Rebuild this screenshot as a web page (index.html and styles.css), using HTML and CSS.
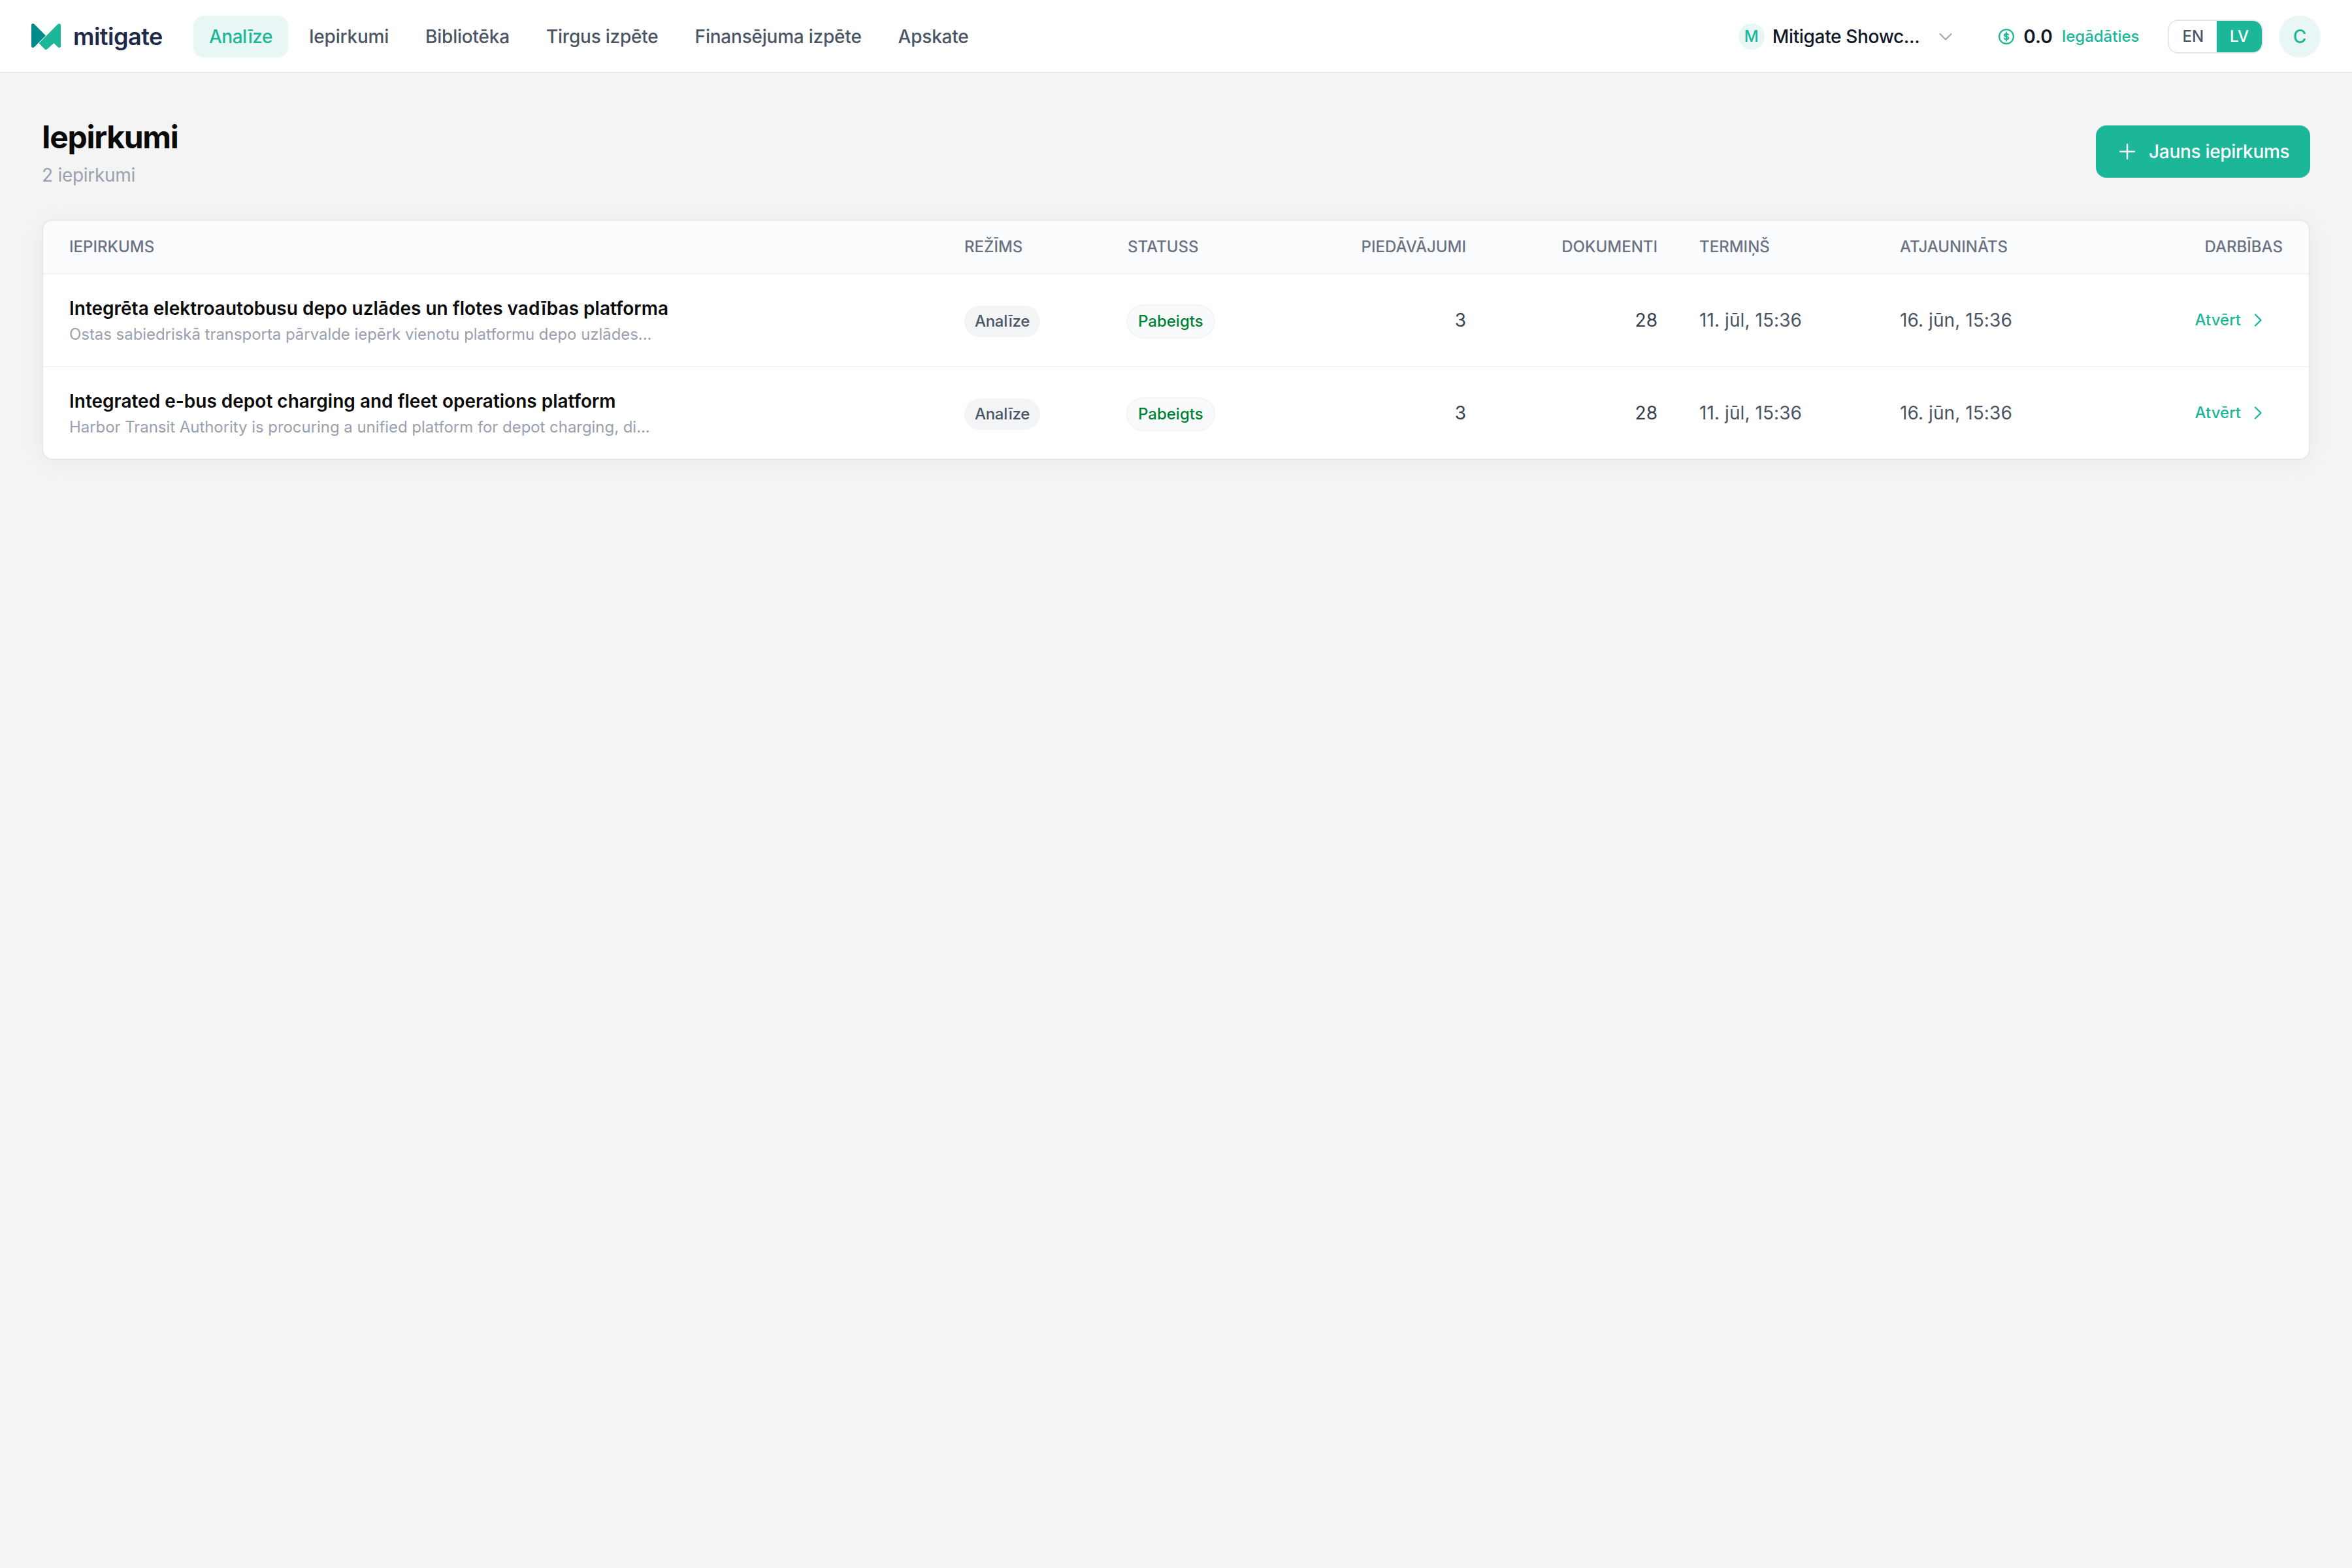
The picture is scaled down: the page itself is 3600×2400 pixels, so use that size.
FILE: index.html
```html
<!DOCTYPE html>
<html lang="lv">
<head>
  <meta charset="UTF-8" />
  <meta name="viewport" content="width=device-width, initial-scale=1.0" />
  <title>Iepirkumi</title>
  <link rel="stylesheet" href="styles.css">
</head>
<body>
  <header class="topbar">
    <a class="logo">
      <svg class="logo-mark" viewBox="0 0 46 40">
        <path d="M0 2.500C0 0.200 2.500-0.800 4.500 1L22 18.500 4.500 36C2.500 37.800 0 37 0 34.500Z" fill="#008b8b"/>
        <path d="M40.500 1C42-0.500 45 0.200 45 2.500V34.500C45 37 42.500 37.800 40.500 36L34.500 30 24.500 39C23.200 40.300 21.500 40.300 20.300 39L11.500 30.300Z" fill="#1cb698"/>
      </svg>
      <span class="logo-text">mitigate</span>
    </a>
    <nav class="nav">
      <a class="nav-link active">Analīze</a>
      <a class="nav-link">Iepirkumi</a>
      <a class="nav-link">Bibliotēka</a>
      <a class="nav-link">Tirgus izpēte</a>
      <a class="nav-link">Finansējuma izpēte</a>
      <a class="nav-link">Apskate</a>
    </nav>
    <div class="topbar-right">
      <div class="workspace">
        <span class="workspace-badge">M</span>
        <span class="workspace-name">Mitigate Showc...</span>
        <svg class="chevron" viewBox="0 0 24 24"><path d="M3.500 8l8.500 8.500L20.500 8"/></svg>
      </div>
      <div class="credits">
        <svg class="coin" viewBox="0 0 24 24">
          <circle cx="12" cy="12" r="10.900"/>
          <path d="M12 5.500v13M15 9.200C14.500 8.200 13.400 7.800 12 7.800c-1.800 0-3 .8-3 2.100 0 3 6.200 1.200 6.200 4.200 0 1.400-1.300 2.200-3.200 2.200-1.600 0-2.800-.6-3.200-1.700"/>
        </svg>
        <span class="credits-value">0.0</span>
        <a class="credits-buy">Iegādāties</a>
      </div>
      <div class="lang">
        <button class="lang-btn">EN</button>
        <button class="lang-btn selected">LV</button>
      </div>
      <div class="avatar">C</div>
    </div>
  </header>

  <main class="page">
    <div class="page-head">
      <div>
        <h1>Iepirkumi</h1>
        <p class="count">2 iepirkumi</p>
      </div>
      <button class="btn-new">
        <svg class="plus" viewBox="0 0 24 24"><path d="M12 1v22M1 12h22"/></svg>
        Jauns iepirkums
      </button>
    </div>

    <div class="card">
      <table>
        <colgroup>
          <col class="col-name"><col class="col-mode"><col class="col-status"><col class="col-bids">
          <col class="col-docs"><col class="col-due"><col class="col-updated"><col class="col-actions">
        </colgroup>
        <thead>
          <tr>
            <th class="first">Iepirkums</th>
            <th>Režīms</th>
            <th>Statuss</th>
            <th class="num">Piedāvājumi</th>
            <th class="num">Dokumenti</th>
            <th>Termiņš</th>
            <th>Atjaunināts</th>
            <th class="last">Darbības</th>
          </tr>
        </thead>
        <tbody>
          <tr>
            <td class="first">
              <div class="title">Integrēta elektroautobusu depo uzlādes un flotes vadības platforma</div>
              <div class="desc">Ostas sabiedriskā transporta pārvalde iepērk vienotu platformu depo uzlādes...</div>
            </td>
            <td class="tags"><span class="tag">Analīze</span></td>
            <td class="tags"><span class="tag status">Pabeigts</span></td>
            <td class="num">3</td>
            <td class="num">28</td>
            <td class="date">11. jūl, 15:36</td>
            <td class="date">16. jūn, 15:36</td>
            <td class="last"><a class="open">Atvērt <svg class="arrow" viewBox="0 0 12 20"><path d="M2 1.500l8.500 8.500L2 18.500"/></svg></a></td>
          </tr>
          <tr>
            <td class="first">
              <div class="title">Integrated e-bus depot charging and fleet operations platform</div>
              <div class="desc">Harbor Transit Authority is procuring a unified platform for depot charging, di...</div>
            </td>
            <td class="tags"><span class="tag">Analīze</span></td>
            <td class="tags"><span class="tag status">Pabeigts</span></td>
            <td class="num">3</td>
            <td class="num">28</td>
            <td class="date">11. jūl, 15:36</td>
            <td class="date">16. jūn, 15:36</td>
            <td class="last"><a class="open">Atvērt <svg class="arrow" viewBox="0 0 12 20"><path d="M2 1.500l8.500 8.500L2 18.500"/></svg></a></td>
          </tr>
        </tbody>
      </table>
    </div>
  </main>
</body>
</html>
```

FILE: styles.css
```css
* {
  box-sizing: border-box;
}

body {
  margin: 0;
  min-height: 100vh;
  background: #f4f4f4;
  color: #0a0a0a;
  font-family: Inter, sans-serif;
  font-size: 28px;
  line-height: 40px;
}

button {
  border: 0;
  font: inherit;
}

svg {
  fill: none;
  stroke-linecap: round;
  stroke-linejoin: round;
  flex-shrink: 0;
}

.topbar {
  display: flex;
  align-items: center;
  height: 112px;
  padding: 2px 48px 0;
  background: #fff;
  border-bottom: 2px solid #e5e7eb;
}

.logo {
  display: flex;
  align-items: center;
  width: 248px;
}

.logo-mark {
  width: 46px;
  height: 40px;
}

.logo-text {
  margin-left: 18px;
  color: #1f2a4a;
  font-size: 36px;
  font-weight: 600;
  line-height: 38px;
  letter-spacing: -0.5px;
}

.nav {
  display: flex;
  gap: 8px;
}

.nav-link {
  padding: 12px 24px;
  border-radius: 16px;
  color: #4a5565;
  font-weight: 500;
  letter-spacing: -0.22px;
}

.nav-link.active {
  background: #e8f6f5;
  color: #1cb698;
  letter-spacing: -0.5px;
}

.topbar-right {
  display: flex;
  align-items: center;
  margin-left: auto;
}

.workspace {
  display: flex;
  align-items: center;
}

.workspace-badge {
  width: 40px;
  height: 40px;
  border-radius: 50%;
  background: #e8f6f5;
  color: #1cb698;
  font-size: 24px;
  font-weight: 500;
  text-align: center;
}

.workspace-name {
  margin-left: 12px;
  color: #101828;
  font-weight: 500;
  letter-spacing: -0.34px;
}

.chevron {
  width: 24px;
  height: 24px;
  margin-left: 28px;
  stroke: #99a1af;
  stroke-width: 2;
}

.credits {
  display: flex;
  align-items: center;
  margin-left: 69px;
}

.coin {
  width: 24px;
  height: 24px;
  stroke: #1cb698;
  stroke-width: 2.2;
}

.credits-value {
  margin-left: 14px;
  color: #101828;
  font-weight: 600;
}

.credits-buy {
  margin-left: 14px;
  color: #1cb698;
  font-size: 24px;
  font-weight: 500;
}

.lang {
  display: flex;
  height: 52px;
  margin-left: 44px;
  border: 2px solid #e5e7eb;
  border-radius: 16px;
  overflow: hidden;
}

.lang-btn {
  padding: 0 20px;
  background: #fff;
  color: #4a5565;
  font-size: 24px;
  font-weight: 500;
}

.lang-btn.selected {
  background: #1cb698;
  color: #fff;
}

.avatar {
  width: 64px;
  height: 64px;
  margin-left: 24px;
  border-radius: 50%;
  background: #e8f6f5;
  color: #1cb698;
  font-weight: 500;
  line-height: 64px;
  text-align: center;
}

.page {
  padding: 64px;
}

.page-head {
  display: flex;
  align-items: center;
  justify-content: space-between;
  height: 112px;
  margin-bottom: 48px;
}

h1 {
  margin: 2px 0 0;
  font-size: 48px;
  font-weight: 700;
  line-height: 64px;
  letter-spacing: -1.3px;
}

.count {
  margin: 6px 0 0;
  color: #99a1af;
  letter-spacing: -0.28px;
}

.btn-new {
  display: flex;
  align-items: center;
  gap: 21px;
  width: 328px;
  height: 80px;
  padding: 0 32px 0 36px;
  border-radius: 16px;
  background: #1cb698;
  color: #fff;
  font-weight: 500;
  letter-spacing: -0.3px;
  white-space: nowrap;
}

.plus {
  width: 24px;
  height: 24px;
  stroke: #fff;
  stroke-width: 2.4;
}

.card {
  overflow: hidden;
  border: 2px solid #e5e7eb;
  border-radius: 16px;
  background: #fff;
  box-shadow: 0 4px 40px rgba(0, 0, 0, 0.05);
}

table {
  width: 100%;
  border-collapse: separate;
  border-spacing: 0;
  table-layout: fixed;
}

.col-name { width: 1378px; }
.col-mode { width: 250px; }
.col-status { width: 290px; }
.col-bids { width: 292px; }
.col-docs { width: 293px; }
.col-due { width: 307px; }
.col-updated { width: 310px; }

th {
  height: 82px;
  padding: 0 32px;
  background: #f9fbfd;
  border-bottom: 2px solid #f3f4f6;
  color: #6a7282;
  font-size: 24px;
  font-weight: 500;
  text-align: left;
  text-transform: uppercase;
}

td {
  height: 142px;
  padding: 0 32px;
  border-bottom: 2px solid #f3f4f6;
}

tbody tr:last-child td {
  height: 140px;
  border-bottom: 0;
}

th.first,
td.first {
  padding-left: 40px;
}

td.first {
  padding-top: 3px;
}

th.last,
td.last {
  padding-right: 40px;
  text-align: right;
}

td.last {
  padding-bottom: 2px;
}

th.num,
td.num {
  text-align: right;
}

td.num {
  color: #364153;
}

td.tags {
  padding-top: 3px;
}

.title {
  font-weight: 600;
}

.desc {
  color: #99a1af;
  font-size: 24px;
  letter-spacing: -0.05px;
}

.tag {
  display: inline-block;
  padding: 4px 16px;
  border-radius: 26px;
  background: #f3f4f6;
  color: #4a5565;
  font-size: 24px;
  font-weight: 500;
  letter-spacing: -0.3px;
}

.tag.status {
  margin-left: -2px;
  border: 2px solid #f3f4f6;
  background: #f9fafb;
  color: #008236;
  letter-spacing: 0;
}

.date {
  color: #4a5565;
  letter-spacing: 0.08px;
}

.open {
  display: inline-flex;
  align-items: center;
  gap: 20px;
  margin-right: 32px;
  color: #1cb698;
  font-size: 24px;
  font-weight: 500;
}

.arrow {
  width: 12px;
  height: 20px;
  stroke: #1cb698;
  stroke-width: 2.3;
}
```
